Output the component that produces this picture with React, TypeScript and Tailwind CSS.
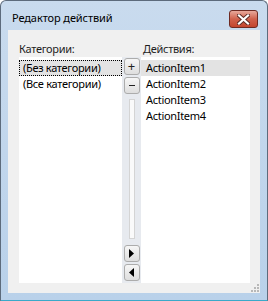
import React from "react";

const font = { fontFamily: '"Segoe UI", "Noto Sans", "Open Sans", sans-serif' };

function SmallBtn({ children }: { children: React.ReactNode }) {
  return (
    <div className="w-[16px] h-[17px] rounded-[3px] border border-[#acacac] bg-gradient-to-b from-[#f6f6f6] to-[#dedede] flex items-center justify-center">
      {children}
    </div>
  );
}

export default function App() {
  return (
    <div className="w-[268px] h-[301px] bg-white" style={font}>
      <div className="w-[268px] h-[301px] flex flex-col border border-[#5d6b7c] border-b-[#3aa9c9] bg-gradient-to-b from-[#c9dbee] to-[#b9d1ea] rounded-t-[6px]">
        {/* title bar */}
        <div className="h-[29px] flex items-start shrink-0">
          <div className="pl-[11px] pt-[10px] text-[11px] leading-[14px] text-black tracking-[-0.1px]">Редактор действий</div>
          <div className="ml-auto mr-[9px] mt-[9px] w-[29px] h-[18px] rounded-[3px] border border-[#6e2a22] bg-gradient-to-b from-[#e7a89b] via-[#d0614c] to-[#c3452e] flex items-center justify-center">
            <svg width="13" height="11" viewBox="0 0 13 11">
              <path d="M2 1.5 L11 9.5 M11 1.5 L2 9.5" stroke="#5a2a24" strokeWidth="4" strokeLinecap="square" />
              <path d="M2 1.5 L11 9.5 M11 1.5 L2 9.5" stroke="#ffffff" strokeWidth="2.2" strokeLinecap="square" />
            </svg>
          </div>
        </div>
        {/* client */}
        <div className="mx-[7px] mb-[7px] flex-1 bg-[#f0f0f0] relative flex flex-col pt-[12px] pl-[11px] pr-[10px] pb-[10px]">
          <div className="flex text-[11px] leading-[14px] text-[#1e1e1e] tracking-[-0.3px]">
            <div className="w-[123px]">Категории:</div>
            <div className="pl-[1px]">Действия:</div>
          </div>
          <div className="flex flex-1 mt-[1px]">
            <div className="w-[103px] bg-white pt-[3px] text-[11px] leading-[16px] text-black tracking-[-0.3px]">
              <div className="h-[16px] bg-[#e3e3e3] border border-dotted border-black leading-[14px] pl-[3px]">(Без категории)</div>
              <div className="h-[16px] pl-[4px]">(Все категории)</div>
            </div>
            <div className="w-[19px] bg-[#e7eaef] flex flex-col items-center pt-[1px] pb-[2px]">
              <SmallBtn>
                <span className="text-[13px] leading-none text-[#222]">+</span>
              </SmallBtn>
              <div className="mt-[2px]">
                <SmallBtn>
                  <div className="w-[6px] h-[1px] bg-[#222]" />
                </SmallBtn>
              </div>
              <div className="mt-[5px] flex-1 w-[6px] border border-[#d4d4d4] bg-[#fafafa]" />
              <div className="mt-[6px]">
                <SmallBtn>
                  <svg width="5" height="9" viewBox="0 0 5 9"><path d="M0 0 L5 4.5 L0 9 Z" fill="#000" /></svg>
                </SmallBtn>
              </div>
              <div className="mt-[2px]">
                <SmallBtn>
                  <svg width="5" height="9" viewBox="0 0 5 9"><path d="M5 0 L0 4.5 L5 9 Z" fill="#000" /></svg>
                </SmallBtn>
              </div>
            </div>
            <div className="flex-1 bg-white pt-[3px] text-[11px] leading-[16px] text-black tracking-[-0.3px]">
              <div className="h-[16px] pl-[5px] bg-[#e3e3e3]">ActionItem1</div>
              <div className="h-[16px] pl-[5px]">ActionItem2</div>
              <div className="h-[16px] pl-[5px]">ActionItem3</div>
              <div className="h-[16px] pl-[5px]">ActionItem4</div>
            </div>
          </div>
          {/* size grip */}
          <svg className="absolute right-[1px] bottom-[1px]" width="9" height="9" viewBox="0 0 9 9">
            {[[7, 1], [4, 4], [7, 4], [1, 7], [4, 7], [7, 7]].map(([x, y], i) => (
              <rect key={i} x={x} y={y} width="2" height="2" fill="#b8b8b8" />
            ))}
          </svg>
        </div>
      </div>
    </div>
  );
}
